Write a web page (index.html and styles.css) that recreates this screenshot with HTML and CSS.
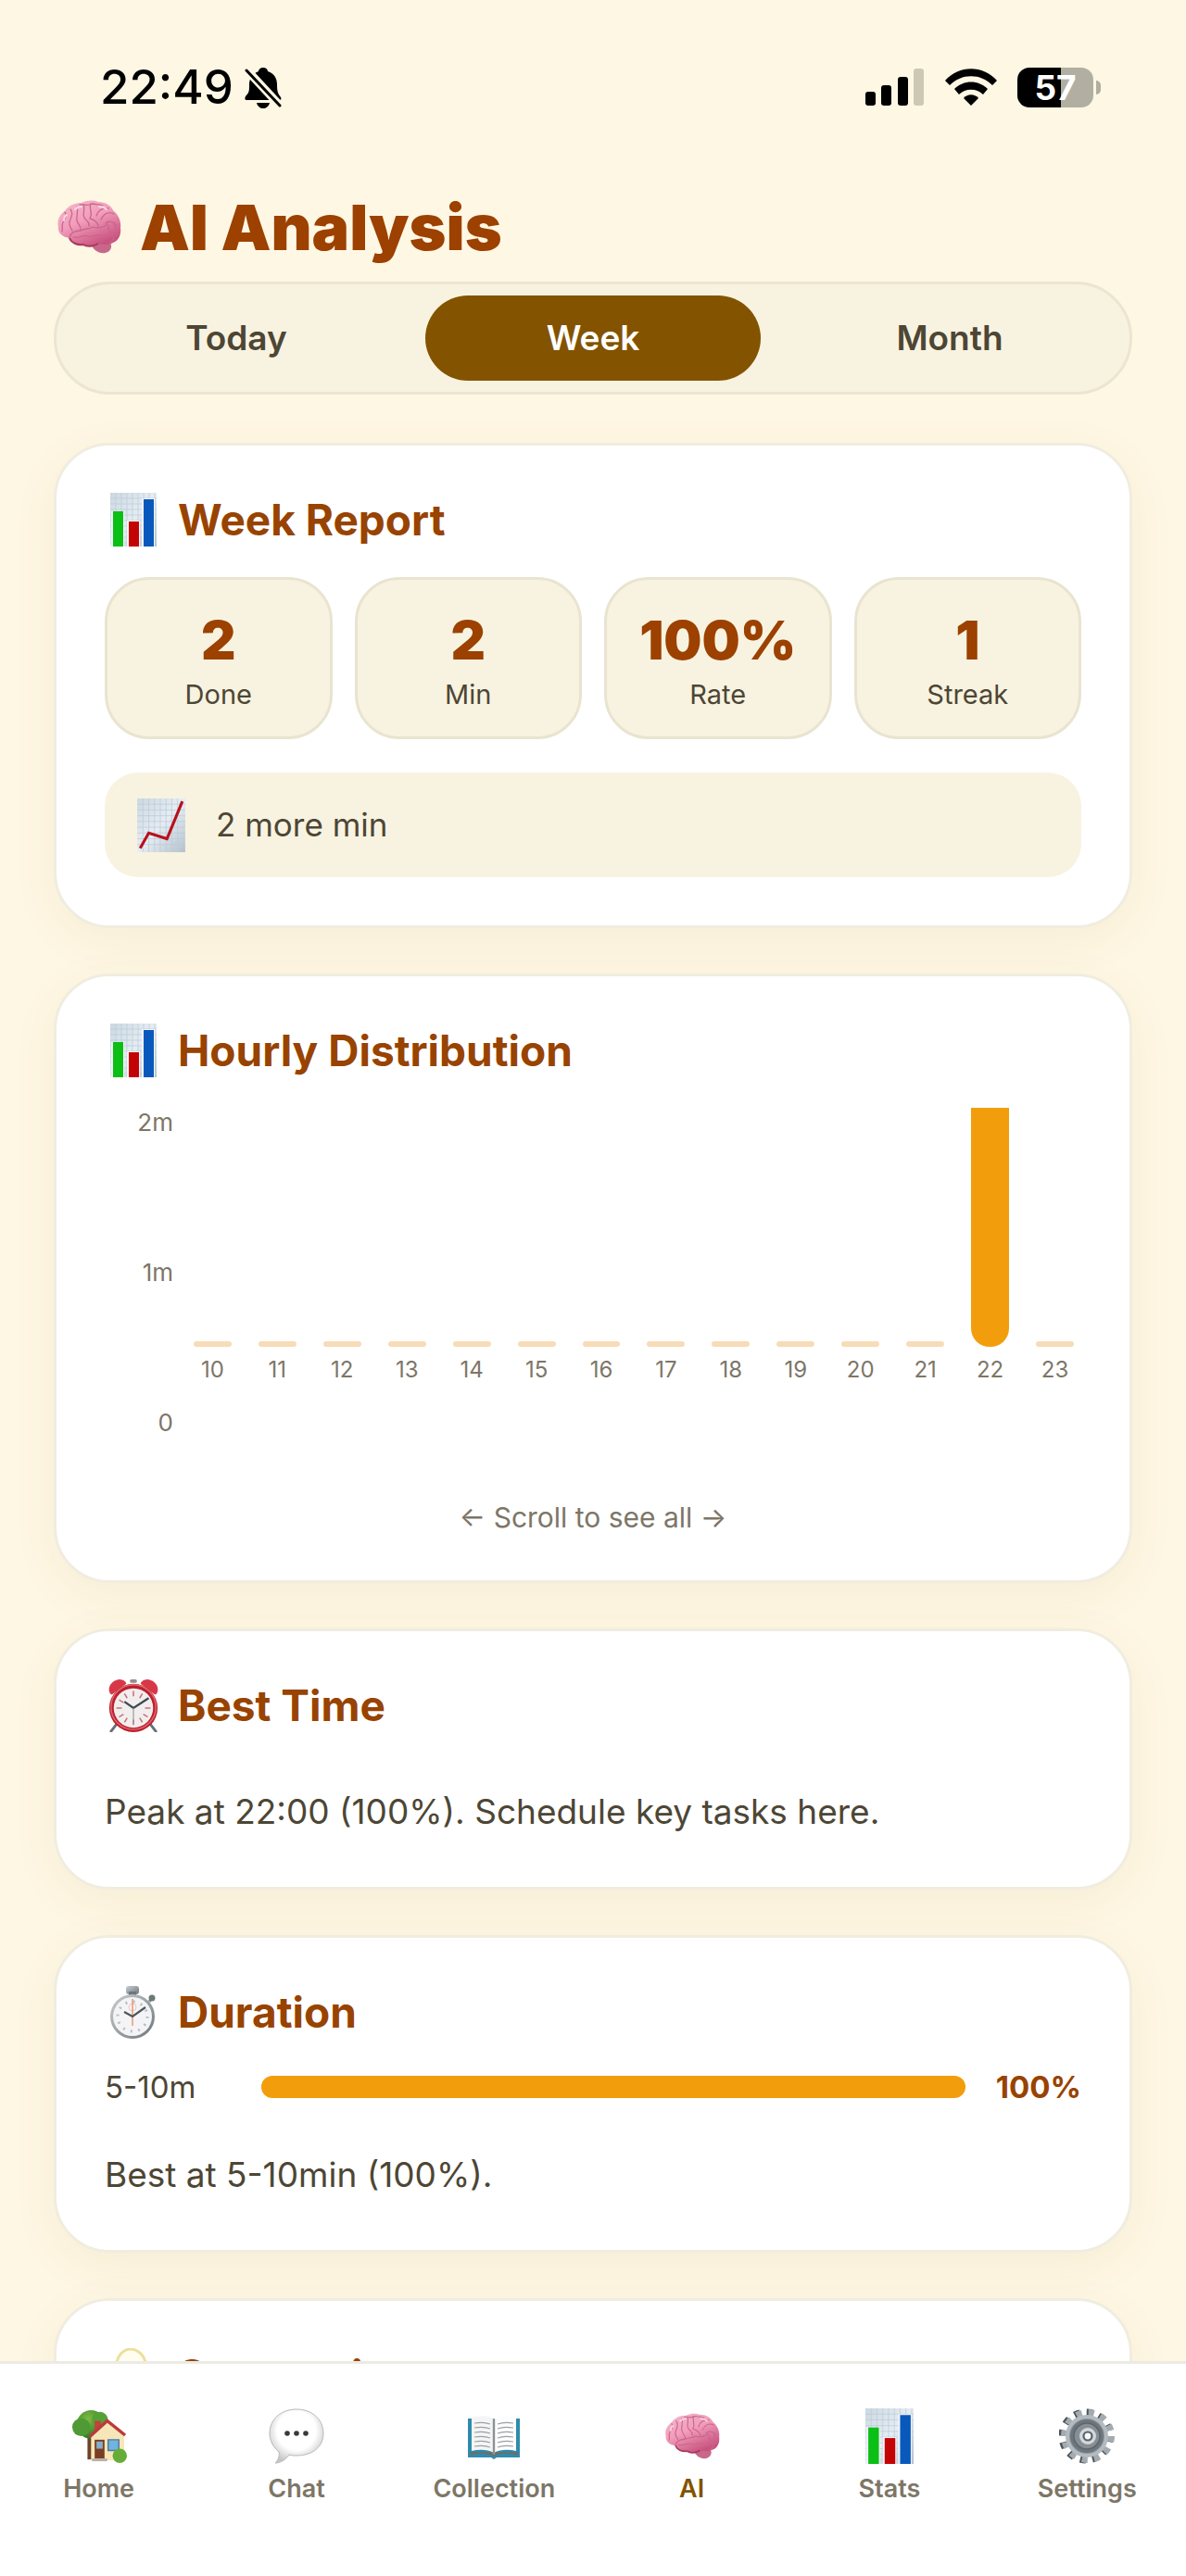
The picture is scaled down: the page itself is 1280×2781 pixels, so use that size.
FILE: index.html
```html
<!DOCTYPE html>
<html lang="en">
<head>
    <meta charset="UTF-8">
    <meta name="viewport" content="width=device-width, initial-scale=1.0">
    <title>AI Analysis</title>
    <link rel="stylesheet" href="styles.css">
</head>
<body>
    <!-- Shared icons -->
    <svg class="sprite" aria-hidden="true">
        <defs>
            <linearGradient id="brainFill" x1="0" y1="0" x2="0.6" y2="1">
                <stop offset="0" stop-color="#f3b9cb"/>
                <stop offset="0.5" stop-color="#f29dbb"/>
                <stop offset="1" stop-color="#c9527f"/>
            </linearGradient>
            <linearGradient id="paperFill" x1="0" y1="0" x2="1" y2="1">
                <stop offset="0" stop-color="#cbd8e2"/>
                <stop offset="0.5" stop-color="#e6edf4"/>
                <stop offset="1" stop-color="#b3c1cc"/>
            </linearGradient>
            <linearGradient id="metalFill" x1="0" y1="0" x2="1" y2="1">
                <stop offset="0" stop-color="#c9ced1"/>
                <stop offset="1" stop-color="#6d767b"/>
            </linearGradient>
            <radialGradient id="bubbleFill" cx="0.5" cy="0.4" r="0.6">
                <stop offset="0.6" stop-color="#ffffff"/>
                <stop offset="1" stop-color="#c6c6c6"/>
            </radialGradient>
            <radialGradient id="treeFill" cx="0.4" cy="0.3" r="0.7">
                <stop offset="0" stop-color="#7cbb45"/>
                <stop offset="1" stop-color="#2f7a22"/>
            </radialGradient>
        </defs>

        <symbol id="icon-brain" viewBox="0 0 70 58">
            <path d="M51 43c5 0 9 4 8 8-1 5-6 7-11 6-6-1-9-6-12-10z" fill="#c7688a"/>
            <path d="M14 41C6 40 1 35 2 29 0 22 4 15 9 12 13 5 21 3 27 3 33 0 40 0 45 2 53 2 59 6 61 11 67 16 70 23 69 30c1 7-2 14-8 16-5 3-11 2-16 1-5 3-12 4-16 1-7 1-13-2-15-7z" fill="url(#brainFill)"/>
            <g fill="none" stroke="#c9668a" stroke-width="1.3" stroke-linecap="round">
                <path d="M14 41c1-6 6-8 12-8 5-3 9-1 13-4 6 2 11 1 16-3"/>
                <path d="M18 40c6 2 10-3 16-1 5 2 8-3 14-1 5 2 10 2 12-2"/>
                <path d="M9 13c3 4 0 8-2 11s0 7-1 10"/>
                <path d="M15 10c4 5 0 9-1 14s2 6 3 9"/>
                <path d="M22 7c2 6-1 10 0 15s5 6 4 10"/>
                <path d="M29 5c3 6-2 9 1 14s6 4 5 9"/>
                <path d="M37 4c-3 6 3 9-1 16 5 1 9 5 9 8"/>
                <path d="M25 5c5-1 8 2 13-1 5 1 8 0 12 2"/>
                <path d="M43 17c2-6 6-9 13-8"/>
                <path d="M48 21c3-6 8-9 14-6"/>
                <path d="M53 25c3-3 8-2 12 2"/>
                <path d="M56 28c-1 5 3 7 5 10s0 5-3 8"/>
                <path d="M62 27c4 4 4 8 2 12"/>
            </g>
            <path d="M14 41c2 5 8 8 15 7 4 3 11 2 16-1" fill="none" stroke="#a8385f" stroke-width="2"/>
            <path d="M20 10c2-2 4-3 7-3M46 7c4 0 6 1 8 3M8 22c0-3 1-5 3-6" fill="none" stroke="#fbd5e2" stroke-width="2" stroke-linecap="round"/>
        </symbol>

        <symbol id="icon-bars" viewBox="0 0 50 58" preserveAspectRatio="none">
            <rect width="50" height="58" fill="url(#paperFill)"/>
            <path d="M0 6h50M0 12h50M0 18h50M0 24h50M0 30h50M0 36h50M0 42h50M0 48h50M0 54h50M6 0v58M12 0v58M18 0v58M24 0v58M30 0v58M36 0v58M42 0v58M48 0v58" stroke="#bccad5" stroke-width="0.7"/>
            <path d="M1 20h14v38H1zM18 30h14v28H18zM34 6h14v52H34z" fill="#f1f4f7"/>
            <rect x="3" y="20" width="11" height="38" fill="#0abf15"/>
            <rect x="20" y="31" width="11" height="27" fill="#c40306"/>
            <rect x="36" y="7" width="11" height="51" fill="#0959bd"/>
        </symbol>

        <symbol id="icon-trend" viewBox="0 0 50 56">
            <rect width="50" height="56" fill="url(#paperFill)"/>
            <path d="M0 6h50M0 12h50M0 18h50M0 24h50M0 30h50M0 36h50M0 42h50M0 48h50M6 0v56M12 0v56M18 0v56M24 0v56M30 0v56M36 0v56M42 0v56" stroke="#bccad5" stroke-width="0.7"/>
            <path d="M3 52L12 36l19 6L47 3" fill="none" stroke="#b8101b" stroke-width="3"/>
        </symbol>

        <symbol id="icon-alarm" viewBox="0 0 58 60">
            <path d="M11 50l-7 9M47 50l7 9" stroke="#65717a" stroke-width="3" stroke-linecap="round"/>
            <rect x="25" y="1" width="8" height="4" rx="2" fill="#9a8c8c"/>
            <path d="M3 17C-1 10 5 2 13 1c5 0 8 3 8 5L5 18z" fill="#d73848"/>
            <path d="M55 17c4-7-2-15-10-16-5 0-8 3-8 5l16 12z" fill="#d73848"/>
            <ellipse cx="29" cy="33" rx="27" ry="27" fill="#bd1f2e"/>
            <ellipse cx="29" cy="32" rx="25" ry="25" fill="none" stroke="#e06a70" stroke-width="1.5"/>
            <circle cx="29" cy="33" r="22" fill="#f2eeee"/>
            <path d="M29 14v6M29 46v6M10 33h6M42 33h6M19 17l3 5M36 44l3 5M13 24l5 3M13 43l5-3M19 49l3-5M45 43l-5-3M39 17l-3 5" stroke="#c8707a" stroke-width="1.6"/>
            <path d="M19 26l10 7 17-11" fill="none" stroke="#3d4a50" stroke-width="2.4"/>
            <path d="M29 33v17" stroke="#8f9a9c" stroke-width="1.2"/>
        </symbol>

        <symbol id="icon-stopwatch" viewBox="0 0 52 58">
            <rect x="18" y="1" width="14" height="9" rx="3" fill="url(#metalFill)"/>
            <rect x="21" y="7" width="8" height="6" fill="#6d767b"/>
            <path d="M43 18l4-5" stroke="#8b9599" stroke-width="3"/>
            <circle cx="46" cy="14" r="3.5" fill="#6b7a75"/>
            <circle cx="25" cy="34" r="24" fill="url(#metalFill)"/>
            <circle cx="25" cy="34" r="21" fill="#f4f4f6"/>
            <circle cx="25" cy="34" r="16" fill="none" stroke="#b9bec1" stroke-width="3" stroke-dasharray="2 6.4"/>
            <circle cx="25" cy="24" r="4" fill="none" stroke="#e8c9bd" stroke-width="1"/>
            <path d="M25 15v29" stroke="#eb9c80" stroke-width="1.6"/>
            <path d="M16 29l9 5 14-10" fill="none" stroke="#4b585f" stroke-width="2.2"/>
        </symbol>

        <symbol id="icon-bulb" viewBox="0 0 40 58">
            <path d="M13 42C13 34 2 29 2 17 2 8 10 1 17 1s16 7 16 16c0 12-11 17-11 25z" fill="#fffdf0" stroke="#ecdf9a" stroke-width="3"/>
            <path d="M12 44h12v9H12z" fill="#a5abad"/>
        </symbol>

        <symbol id="icon-home" viewBox="0 0 62 60">
            <path d="M18 26h5v30h-5z" fill="#6b4428"/>
            <circle cx="22" cy="17" r="16" fill="url(#treeFill)"/>
            <circle cx="11" cy="20" r="10" fill="#4f9a35"/>
            <circle cx="32" cy="12" r="9" fill="#56a038"/>
            <path d="M22 30l18-17 19 16v28H22z" fill="#f7e6b8"/>
            <path d="M26 13h7v8l-7 5z" fill="#c2423c"/>
            <path d="M20 31l20-18 20 16" fill="none" stroke="#bb3a3c" stroke-width="3.5"/>
            <path d="M26 34h11v21H26z" fill="#7a3e24"/>
            <path d="M28 36h7v8h-7z" fill="#86aec6"/>
            <path d="M41 34h12v12H41z" fill="#6fb4e2" stroke="#557995" stroke-width="1.5"/>
            <path d="M23 55h17v3H23z" fill="#b7b1a6"/>
            <circle cx="54" cy="52" r="8" fill="#65ad38"/>
        </symbol>

        <symbol id="icon-chat" viewBox="0 0 60 60">
            <path d="M30 1c17 0 29 11 29 26 0 14-11 24-29 24-3 0-5 0-8-1-3 5-9 9-15 9 3-3 5-7 4-12C5 42 1 35 1 27 1 12 13 1 30 1z" fill="url(#bubbleFill)" stroke="#b9b9b9" stroke-width="1"/>
            <circle cx="20" cy="27" r="2.8" fill="#3a3a3a"/>
            <circle cx="30" cy="27" r="2.8" fill="#3a3a3a"/>
            <circle cx="40" cy="27" r="2.8" fill="#3a3a3a"/>
        </symbol>

        <symbol id="icon-book" viewBox="0 0 58 60">
            <path d="M1 11h56v42H32l-3 2-3-2H1z" fill="#2f8bad"/>
            <path d="M3 51c8-3 18-3 26 1 8-4 18-4 26-1v-4H3z" fill="#68716f"/>
            <path d="M5 10c8-2 18-3 24 2v36c-7-4-16-4-24-2z" fill="#f5f5f5"/>
            <path d="M53 10c-8-2-18-3-24 2v36c7-4 16-4 24-2z" fill="#fdfdfd"/>
            <path d="M29 12v38" stroke="#8b9294" stroke-width="2.4"/>
            <path d="M8 16c6-1 12-1 17 1M8 21c6-1 12-1 17 1M8 26c6-1 12-1 17 1M8 31c6-1 12-1 17 1M8 36c6-1 12-1 17 1M8 41c6-1 12-1 17 1M50 16c-6-1-12-1-17 1M50 21c-6-1-12-1-17 1M50 26c-6-1-12-1-17 1M50 31c-6-1-12-1-17 1M50 36c-6-1-12-1-17 1M50 41c-6-1-12-1-17 1" fill="none" stroke="#9ba0a3" stroke-width="1.2"/>
        </symbol>

        <symbol id="icon-gear" viewBox="0 0 60 60">
            <circle cx="29" cy="30" r="25" fill="none" stroke="#4b545b" stroke-width="9" stroke-dasharray="6 7.09"/>
            <circle cx="31" cy="30" r="25" fill="none" stroke="#a3abb1" stroke-width="8" stroke-dasharray="6 7.09"/>
            <circle cx="30" cy="30" r="21" fill="#8f989e" stroke="#b3bbc0" stroke-width="4"/>
            <circle cx="30" cy="30" r="18" fill="#6d767d"/>
            <circle cx="30" cy="30" r="14" fill="#868f96" stroke="#5d666d" stroke-width="1.5"/>
            <circle cx="31" cy="30" r="9" fill="#d3d8dc"/>
            <circle cx="31" cy="30" r="4.5" fill="#f6f7f8" stroke="#59626a" stroke-width="2.2"/>
        </symbol>
    </svg>

    <div class="app">
        <header class="status-bar">
            <div class="status-left">
                <span>22:49</span>
                <svg class="bell" viewBox="0 0 40 45">
                    <path d="M20 1c3 0 5 2 5 4 7 2 10 8 10 14 0 8 1 10 4 14 1 2 0 3-1 3H2c-2 0-2-2-1-4 4-4 4-6 4-13 0-6 4-12 10-14 0-2 2-4 5-4z"/>
                    <path d="M13 39h14c-1 4-4 6-7 6s-6-2-7-6z"/>
                    <path d="M0 1l40 43" stroke="#fef7e3" stroke-width="9"/>
                    <path d="M2 4l36 38" stroke="#000" stroke-width="3" stroke-linecap="round"/>
                </svg>
            </div>
            <div class="status-right">
                <svg class="signal" viewBox="0 0 64 40">
                    <rect x="0" y="25" width="11" height="15" rx="3"/>
                    <rect x="17" y="18" width="11" height="22" rx="3"/>
                    <rect x="35" y="9" width="11" height="31" rx="3"/>
                    <rect x="52" y="0" width="11" height="40" rx="3" fill="#cdc8b6"/>
                </svg>
                <svg class="wifi" viewBox="0 0 56 40">
                    <path d="M0 13C15-4 41-4 56 13l-5 5C38 5 18 5 5 18z"/>
                    <path d="M10 22c10-10 26-10 36 0l-5 6c-7-7-19-7-26 0z"/>
                    <path d="M20 32c4-5 12-5 16 0l-8 8z"/>
                </svg>
                <div class="battery"><span class="battery-level">57</span></div>
            </div>
        </header>

        <main class="content">
            <h1><svg class="title-icon"><use href="#icon-brain"/></svg>AI Analysis</h1>

            <div class="tabs">
                <button type="button">Today</button>
                <button type="button" class="active">Week</button>
                <button type="button">Month</button>
            </div>

            <section class="card">
                <h2><svg class="icon narrow"><use href="#icon-bars"/></svg>Week Report</h2>
                <div class="stats">
                    <div class="stat"><strong>2</strong><span>Done</span></div>
                    <div class="stat"><strong>2</strong><span>Min</span></div>
                    <div class="stat"><strong>100%</strong><span>Rate</span></div>
                    <div class="stat"><strong>1</strong><span>Streak</span></div>
                </div>
                <div class="trend"><svg class="icon"><use href="#icon-trend"/></svg>2 more min</div>
            </section>

            <section class="card">
                <h2><svg class="icon narrow"><use href="#icon-bars"/></svg>Hourly Distribution</h2>
                <div class="chart">
                    <div class="y-axis"><span>2m</span><span>1m</span><span>0</span></div>
                    <div class="hours">
                        <div class="hour"><div class="track"><div class="bar"></div></div>10</div>
                        <div class="hour"><div class="track"><div class="bar"></div></div>11</div>
                        <div class="hour"><div class="track"><div class="bar"></div></div>12</div>
                        <div class="hour"><div class="track"><div class="bar"></div></div>13</div>
                        <div class="hour"><div class="track"><div class="bar"></div></div>14</div>
                        <div class="hour"><div class="track"><div class="bar"></div></div>15</div>
                        <div class="hour"><div class="track"><div class="bar"></div></div>16</div>
                        <div class="hour"><div class="track"><div class="bar"></div></div>17</div>
                        <div class="hour"><div class="track"><div class="bar"></div></div>18</div>
                        <div class="hour"><div class="track"><div class="bar"></div></div>19</div>
                        <div class="hour"><div class="track"><div class="bar"></div></div>20</div>
                        <div class="hour"><div class="track"><div class="bar"></div></div>21</div>
                        <div class="hour"><div class="track"><div class="bar filled" style="height: 100%"></div></div>22</div>
                        <div class="hour"><div class="track"><div class="bar"></div></div>23</div>
                    </div>
                </div>
                <p class="hint">← Scroll to see all →</p>
            </section>

            <section class="card">
                <h2><svg class="icon"><use href="#icon-alarm"/></svg>Best Time</h2>
                <p class="note">Peak at 22:00 (100%). Schedule key tasks here.</p>
            </section>

            <section class="card">
                <h2><svg class="icon"><use href="#icon-stopwatch"/></svg>Duration</h2>
                <div class="duration">
                    <span class="duration-label">5-10m</span>
                    <div class="duration-track"><div class="duration-fill" style="width: 100%"></div></div>
                    <strong>100%</strong>
                </div>
                <p class="note">Best at 5-10min (100%).</p>
            </section>

            <section class="card">
                <h2><svg class="icon"><use href="#icon-bulb"/></svg>Suggestions</h2>
            </section>
        </main>

        <nav class="bottom-nav">
            <a href="#home"><svg><use href="#icon-home"/></svg>Home</a>
            <a href="#chat"><svg><use href="#icon-chat"/></svg>Chat</a>
            <a href="#collection"><svg><use href="#icon-book"/></svg>Collection</a>
            <a href="#ai" class="active"><svg><use href="#icon-brain"/></svg>AI</a>
            <a href="#stats"><svg class="narrow"><use href="#icon-bars"/></svg>Stats</a>
            <a href="#settings"><svg><use href="#icon-gear"/></svg>Settings</a>
        </nav>
    </div>
</body>
</html>
```

FILE: styles.css
```css
* {
    box-sizing: border-box;
}
body {
    margin: 0;
    background: #fef7e3;
    color: #4d4635;
    font-family: Inter, sans-serif;
}
h1, h2, p {
    margin: 0;
}
.sprite {
    position: absolute;
    width: 0;
    height: 0;
}
.app {
    display: flex;
    flex-direction: column;
    height: 100vh;
}

/* Status bar */
.status-bar {
    display: flex;
    justify-content: space-between;
    align-items: center;
    flex: none;
    padding: 64px 92px 64px 108px;
    color: #000;
}
.status-left,
.status-right {
    display: flex;
    align-items: center;
}
.status-left {
    gap: 12px;
    font-size: 51px;
    font-weight: 500;
    line-height: 60px;
}
.bell {
    width: 40px;
    height: 45px;
}
.status-right {
    gap: 22px;
}
.signal {
    width: 64px;
    height: 40px;
}
.wifi {
    width: 56px;
    height: 40px;
}
.battery {
    position: relative;
    width: 82px;
    height: 43px;
    margin-right: 8px;
    border-radius: 13px;
    background: linear-gradient(to right, #000 57%, #b1afa2 57%);
    color: #fff;
    font-size: 37px;
    font-weight: 700;
    line-height: 43px;
    text-align: center;
}
.battery::after {
    content: "";
    position: absolute;
    top: 14px;
    right: -8px;
    width: 5px;
    height: 15px;
    border-radius: 0 8px 8px 0;
    background: #b1afa2;
}

/* Page */
.content {
    flex: 1;
    min-height: 0;
    overflow: hidden;
    padding: 16px 58px 0;
}
h1 {
    display: flex;
    align-items: center;
    gap: 20px;
    margin-bottom: 18px;
    color: #9c4100;
    font-size: 68px;
    font-weight: 900;
    line-height: 82px;
}
.title-icon {
    width: 70px;
    height: 58px;
    margin-left: 3px;
}
.tabs {
    display: grid;
    grid-template-columns: repeat(3, 1fr);
    gap: 23px;
    padding: 12px 13px;
    margin-bottom: 52px;
    border: 3px solid #ebe5d2;
    border-radius: 61px;
    background: #f8f3e0;
}
.tabs button {
    padding: 0;
    border: none;
    border-radius: 46px;
    background: transparent;
    color: #4d4635;
    font: 600 37px/92px Inter, sans-serif;
    cursor: pointer;
}
.tabs .active {
    background: #835300;
    color: #fff;
}

/* Cards */
.card {
    margin-bottom: 49px;
    padding: 52px;
    border: 3px solid #f0ede0;
    border-radius: 60px;
    background: #fff;
    box-shadow: 0 13px 52px rgba(131, 83, 0, 0.06);
}
h2 {
    display: flex;
    align-items: center;
    gap: 17px;
    margin-bottom: 34px;
    color: #984300;
    font-size: 46px;
    font-weight: 700;
    line-height: 56px;
}
.icon {
    width: 62px;
    height: 58px;
    margin: -1px 0;
}
.icon.narrow {
    padding: 0 6px;
}
.stats {
    display: grid;
    grid-template-columns: repeat(4, 1fr);
    gap: 24px;
    margin-bottom: 36px;
}
.stat {
    display: flex;
    flex-direction: column;
    gap: 6px;
    padding: 30px 0 27px;
    border: 3px solid #e9e4d0;
    border-radius: 48px;
    background: #f8f3e0;
    text-align: center;
}
.stat strong {
    color: #9c4100;
    font-size: 58px;
    font-weight: 900;
    line-height: 70px;
}
.stat span {
    font-size: 29px;
    line-height: 36px;
}
.trend {
    display: flex;
    align-items: center;
    gap: 28px;
    padding: 27px 30px;
    border-radius: 36px;
    background: #f8f3e0;
    font-size: 35px;
    line-height: 59px;
}

/* Hourly chart */
.chart {
    display: flex;
    gap: 22px;
    height: 356px;
    margin-bottom: 70px;
    padding-right: 8px;
    color: #7d7667;
}
.y-axis {
    display: flex;
    flex-direction: column;
    justify-content: space-between;
    width: 74px;
    font-size: 26px;
    line-height: 32px;
    text-align: right;
}
.hours {
    display: grid;
    flex: 1;
    grid-template-columns: repeat(14, 1fr);
    gap: 29px;
}
.hour {
    font-size: 24px;
    line-height: 30px;
    text-align: center;
}
.track {
    display: flex;
    align-items: flex-end;
    height: 258px;
    margin-bottom: 10px;
}
.bar {
    width: 100%;
    height: 6px;
    border-radius: 3px;
    background: #f7dcb8;
}
.bar.filled {
    border-radius: 0 0 20px 20px;
    background: #f29e0c;
}
.hint {
    color: #7d7667;
    font-size: 30px;
    line-height: 32px;
    text-align: center;
}
.note {
    margin-top: 47px;
    font-size: 37px;
    line-height: 58px;
}
h2 + .note {
    margin-top: 58px;
}

/* Duration */
.duration {
    display: flex;
    align-items: center;
    font-size: 33px;
    line-height: 38px;
}
.duration-label {
    width: 169px;
}
.duration-track {
    flex: 1;
    border-radius: 12px;
    background: #f8f3e0;
}
.duration-fill {
    height: 24px;
    border-radius: 12px;
    background: #f29e0c;
}
.duration strong {
    width: 125px;
    color: #984300;
    text-align: right;
}

/* Bottom navigation */
.bottom-nav {
    position: relative;
    display: grid;
    flex: none;
    grid-template-columns: repeat(6, 1fr);
    padding: 48px 0 78px;
    border-top: 3px solid #ecebe3;
    background: #fff;
}
.bottom-nav a {
    display: flex;
    flex-direction: column;
    align-items: center;
    gap: 11px;
    color: #7d7667;
    font-size: 27px;
    font-weight: 600;
    line-height: 32px;
    text-decoration: none;
}
.bottom-nav svg {
    width: 60px;
    height: 60px;
}
.bottom-nav .narrow {
    padding: 0 4px;
}
.bottom-nav .active {
    color: #835300;
}
```
